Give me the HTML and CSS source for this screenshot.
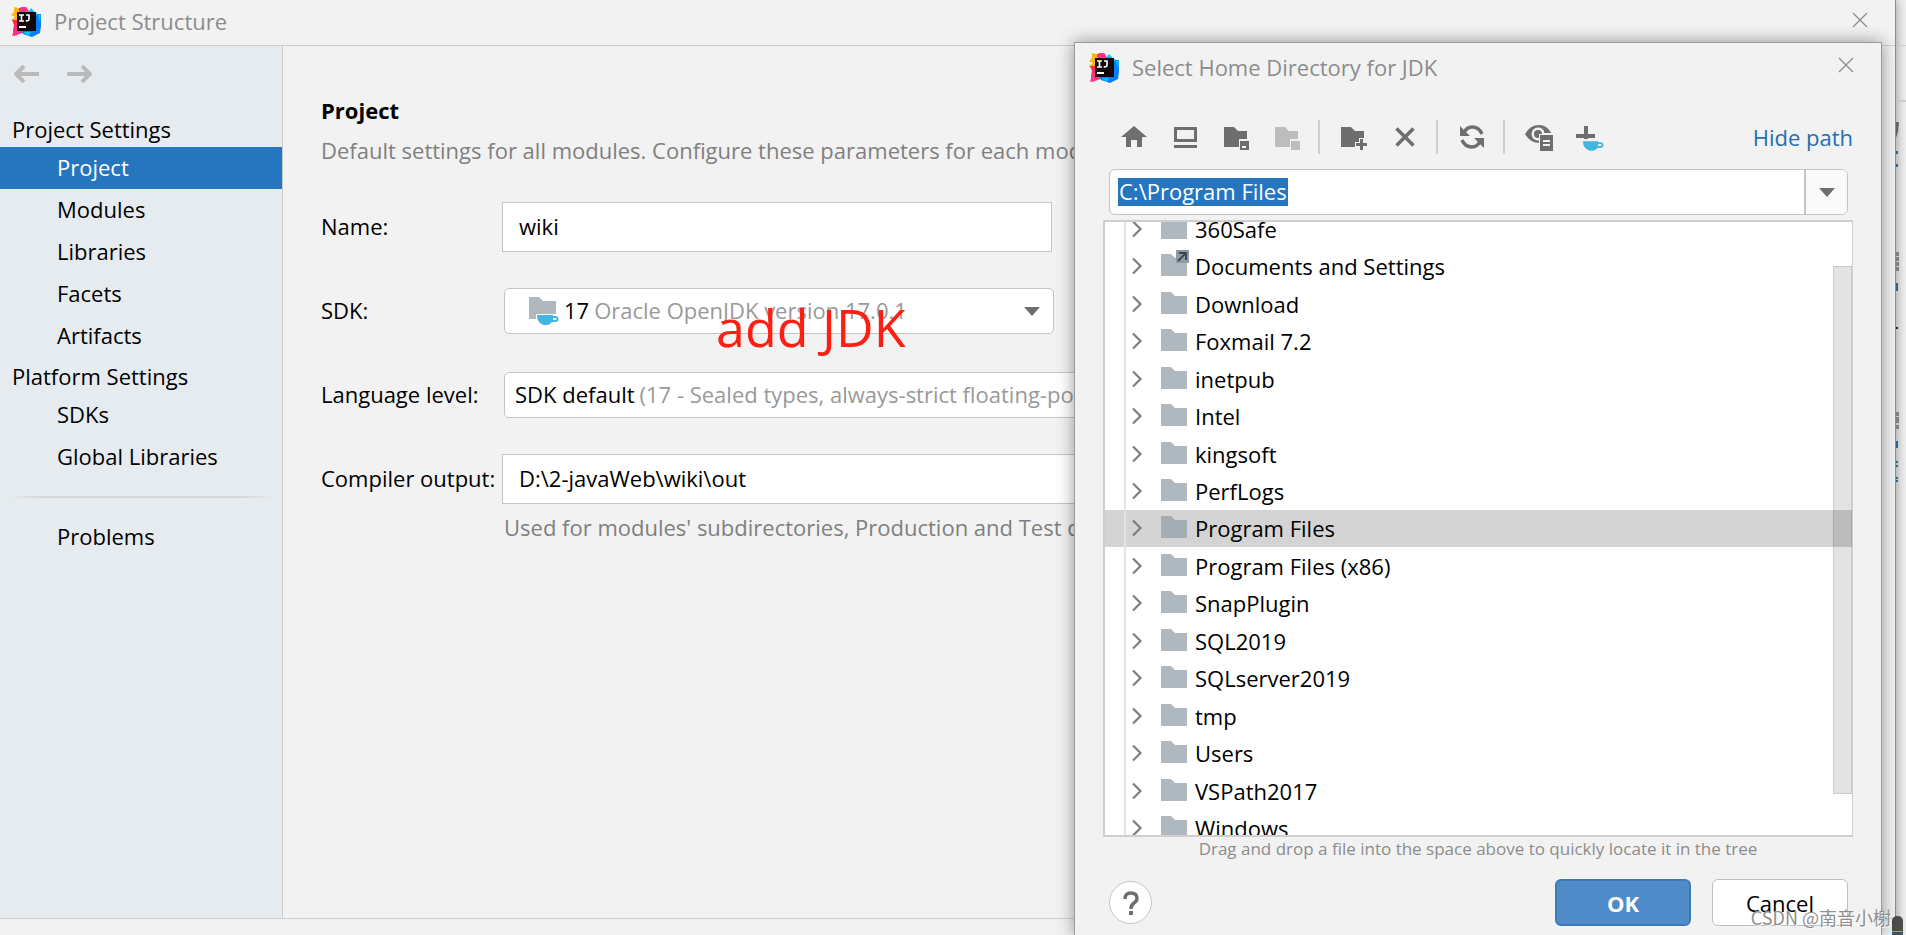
FILE: index.html
```html
<!DOCTYPE html>
<html lang="en">
<head>
<meta charset="utf-8">
<title>Project Structure</title>
<link rel="stylesheet" href="styles.css">
</head>
<body>
<svg class="defs" aria-hidden="true">
  <symbol id="logo" viewBox="0 0 30 30">
    <path fill="#fdb60d" d="M3 0l8 2 4 8-8 8-7-5 4-3-4-2 3-3z"/>
    <path fill="#fe2857" d="M8 1l7-1 4 6-10 6zM1 13l6 0 2 9 10 3-8 1-8 3-1-6 1-5z"/>
    <path fill="#ff318c" d="M10 0l5 0 3 5-9 1zM5 18l5 6 0 2-9 3 2-7z"/>
    <path fill="#07c3f2" d="M20 1l5 5 5 2-1 6-8-2-4-7z"/>
    <path fill="#087cfa" d="M24 8l6-1 0 12-1 7-8 4-9-3-2-3 14-1z"/>
    <path fill="#07c3f2" d="M27 8l3 0-1 8zM12 25l8 0-2 4z"/>
    <rect x="6" y="5" width="19" height="19" fill="#140709"/>
    <path fill="none" stroke="#fff" stroke-width="1.6" d="M8 8h5M10.500 8v6M8 14h5M15 8h3v4q0 2.300-3.300 1.800"/>
    <path fill="#fff" d="M8 19h7v2H8z"/>
  </symbol>
  <symbol id="folder" viewBox="0 0 26 22"><path fill="currentColor" d="M0 0h10l4 4h12v18H0z"/></symbol>
  <symbol id="close" viewBox="0 0 16 16"><path fill="none" stroke="#8f8f8f" stroke-width="1.400" d="M1 1l14 14M15 1L1 15"/></symbol>
  <symbol id="chevron" viewBox="0 0 12 18"><path fill="none" stroke="#7f7f7f" stroke-width="2.200" d="M2 1.500L9.500 9 2 16.500"/></symbol>
  <symbol id="caret" viewBox="0 0 16 9"><path fill="#6e6e6e" d="M0 0h16L8 9z"/></symbol>
  <symbol id="cup" viewBox="0 0 22 10"><path fill="#40b6e0" d="M0 0h16v1h2q3.500 0 3.500 3T18 7h-3q-2 3-5 3H7Q0 8 0 0z"/><path fill="#fff" d="M16 3h2.500q1 0 1 1t-1 1H16z"/></symbol>
</svg>

<div class="desktop">
  <section class="window" aria-label="Project Structure">
    <header class="titlebar">
      <svg class="logo"><use href="#logo"/></svg>
      <h1 class="title">Project Structure</h1>
      <button class="close" aria-label="Close"><svg><use href="#close"/></svg></button>
    </header>

    <div class="body">
      <nav class="sidebar">
        <div class="history">
          <button class="arrow" aria-label="Back"><svg viewBox="0 0 25 18"><path d="M25 9H2M10 1L2 9l8 8"/></svg></button>
          <button class="arrow" aria-label="Forward"><svg viewBox="0 0 25 18"><path d="M0 9h23M15 1l8 8-8 8"/></svg></button>
        </div>
        <h2 class="group">Project Settings</h2>
        <a class="item selected" href="#project">Project</a>
        <a class="item" href="#modules">Modules</a>
        <a class="item" href="#libraries">Libraries</a>
        <a class="item" href="#facets">Facets</a>
        <a class="item" href="#artifacts">Artifacts</a>
        <h2 class="group">Platform Settings</h2>
        <a class="item" href="#sdks">SDKs</a>
        <a class="item" href="#global">Global Libraries</a>
        <hr class="rule">
        <a class="item" href="#problems">Problems</a>
      </nav>

      <main class="content" id="project">
        <h2 class="heading">Project</h2>
        <p class="lead">Default settings for all modules. Configure these parameters for each module on the module page as needed.</p>
        <form class="form">
          <label for="name">Name:</label>
          <input class="text short" id="name" value="wiki">

          <label for="sdk">SDK:</label>
          <div class="combo short sdk">
            <svg class="sdk-icon" viewBox="0 0 30 28"><path fill="#afb8bf" d="M0 0h10l4 4h13v18H0z"/><path fill="#fff" d="M7 17h22v5H7z"/><use href="#cup" x="8" y="18" width="22" height="10"/></svg>
            <span>17</span>
            <select id="sdk"><option>Oracle OpenJDK version 17.0.1</option></select>
            <svg class="caret"><use href="#caret"/></svg>
          </div>

          <label for="level">Language level:</label>
          <div class="combo">
            <span>SDK default</span>
            <select id="level"><option>(17 - Sealed types, always-strict floating-point semantics)</option></select>
            <svg class="caret"><use href="#caret"/></svg>
          </div>

          <label for="output">Compiler output:</label>
          <input class="text" id="output" value="D:\2-javaWeb\wiki\out">
          <p class="hint">Used for modules' subdirectories, Production and Test directories for the corresponding sources.</p>
        </form>
      </main>
    </div>
    <footer class="statusbar"></footer>
  </section>

  <aside class="behind">
    <svg viewBox="0 0 11 935" preserveAspectRatio="xMinYMin meet" aria-hidden="true">
      <path fill="#c9c9c9" d="M0 45h11v1H0zM0 100h11v2H0z"/>
      <path fill="#555" d="M0 122h3l-1 10-2 6z"/>
      <path fill="#0a5a8a" d="M0 151h2v3H0zM0 164h2v3H0zM0 283h2v8H0zM0 441h2v7H0zM0 461h2v2H0zM0 465h2v2H0zM0 477h2v2H0zM0 480h2v2H0z"/>
      <path fill="#000060" d="M0 327h2v2H0z"/>
      <path fill="#777" d="M0 252h3v4H0zM0 257h3v4H0zM0 262h3v4H0zM0 267h3v4H0zM0 412h3v4H0zM0 417h3v6H0zM0 425h3v4H0z"/>
    </svg>
    <div class="marker"></div>
  </aside>

  <p class="annotation">add JDK</p>

  <section class="dialog" role="dialog" aria-labelledby="dialog-title">
    <header class="dialog-title">
      <svg class="logo"><use href="#logo"/></svg>
      <h2 class="title" id="dialog-title">Select Home Directory for JDK</h2>
      <button class="close" aria-label="Close dialog"><svg><use href="#close"/></svg></button>
    </header>

    <div class="toolbar">
      <button class="tool" aria-label="Home"><svg viewBox="0 0 28 28"><path d="M14 3l13 11h-5v10h-5v-7h-6v7H6V14H1z"/></svg></button>
      <button class="tool" aria-label="Desktop"><svg viewBox="0 0 28 28"><path fill-rule="evenodd" d="M3 4h23v15H3zM6 7v9h17V7zM3 22h23v3H3z"/></svg></button>
      <button class="tool" aria-label="Project directory"><svg viewBox="0 0 28 28"><path d="M2 4h10l4 4h9v8h-8v8H2z"/><path fill-rule="evenodd" d="M18 18h9v9h-9zM20 23v2h4v-2z"/></svg></button>
      <button class="tool" aria-label="Module directory" disabled><svg viewBox="0 0 28 28"><path d="M2 4h10l4 4h9v8h-8v8H2zM18 18h9v9h-9z"/></svg></button>
      <span class="divider"></span>
      <button class="tool" aria-label="New folder"><svg viewBox="0 0 28 28"><path d="M1 4h10l4 4h9v7h-5v4h-4v5H1zM20 16h3v4h4v3h-4v4h-3v-4h-4v-3h4z"/></svg></button>
      <button class="tool" aria-label="Delete"><svg viewBox="0 0 28 28"><path class="line" d="M5.500 5.500l17 17M22.500 5.500l-17 17"/></svg></button>
      <span class="divider"></span>
      <button class="tool" aria-label="Refresh"><svg viewBox="0 0 28 28"><path class="line" d="M6 9.500q3-5.500 8-5.500 7 0 10 7M22 18.500q-3 5.500-8 5.500-7 0-10-7"/><path d="M2 3v10h10zM26 25V15H16z"/></svg></button>
      <span class="divider"></span>
      <button class="tool" aria-label="Show hidden files"><svg viewBox="0 0 28 28"><path fill-rule="evenodd" d="M0 11Q5 2 14 2q8 0 12 8H15v10Q5 20 0 11zM13 4.500a6.500 6.500 0 1 0 2 12.700V10h4.400A6.500 6.500 0 0 0 13 4.500z"/><circle cx="13" cy="11" r="4"/><path fill="#f2f2f2" d="M14 11h14v17H14z"/><path fill-rule="evenodd" d="M15 12h13v16H15zM18 17v2h7v-2zM18 21v2h7v-2z"/></svg></button>
      <button class="tool" aria-label="Add JDK"><svg viewBox="0 0 28 28"><path d="M8 3h4v8h7v4h-7v3H8v-3H0v-4h8z"/><path fill="#f2f2f2" d="M6 16h22v3H6z"/><use href="#cup" x="7" y="18" width="21" height="10"/></svg></button>
      <a class="hide-path" href="#path">Hide path</a>
    </div>

    <div class="path">
      <span class="path-field"><input id="path" aria-label="Path" value="C:\Program Files" size="1"></span>
      <button class="path-button" aria-label="Show history"><svg class="caret"><use href="#caret"/></svg></button>
    </div>

    <div class="tree">
      <ul class="rows">
        <li><svg class="chevron"><use href="#chevron"/></svg><svg class="folder"><use href="#folder"/></svg>360Safe</li>
        <li><svg class="chevron"><use href="#chevron"/></svg><svg class="folder" viewBox="0 0 26 22"><use href="#folder" width="26" height="22"/><path fill="#8e9ba5" d="M15-4h13V9H15z"/><path fill="none" stroke="#3c4247" stroke-width="1.800" d="M18-1h7v7M25-1l-8 8"/></svg>Documents and Settings</li>
        <li><svg class="chevron"><use href="#chevron"/></svg><svg class="folder"><use href="#folder"/></svg>Download</li>
        <li><svg class="chevron"><use href="#chevron"/></svg><svg class="folder"><use href="#folder"/></svg>Foxmail 7.2</li>
        <li><svg class="chevron"><use href="#chevron"/></svg><svg class="folder"><use href="#folder"/></svg>inetpub</li>
        <li><svg class="chevron"><use href="#chevron"/></svg><svg class="folder"><use href="#folder"/></svg>Intel</li>
        <li><svg class="chevron"><use href="#chevron"/></svg><svg class="folder"><use href="#folder"/></svg>kingsoft</li>
        <li><svg class="chevron"><use href="#chevron"/></svg><svg class="folder"><use href="#folder"/></svg>PerfLogs</li>
        <li class="current"><svg class="chevron"><use href="#chevron"/></svg><svg class="folder"><use href="#folder"/></svg>Program Files</li>
        <li><svg class="chevron"><use href="#chevron"/></svg><svg class="folder"><use href="#folder"/></svg>Program Files (x86)</li>
        <li><svg class="chevron"><use href="#chevron"/></svg><svg class="folder"><use href="#folder"/></svg>SnapPlugin</li>
        <li><svg class="chevron"><use href="#chevron"/></svg><svg class="folder"><use href="#folder"/></svg>SQL2019</li>
        <li><svg class="chevron"><use href="#chevron"/></svg><svg class="folder"><use href="#folder"/></svg>SQLserver2019</li>
        <li><svg class="chevron"><use href="#chevron"/></svg><svg class="folder"><use href="#folder"/></svg>tmp</li>
        <li><svg class="chevron"><use href="#chevron"/></svg><svg class="folder"><use href="#folder"/></svg>Users</li>
        <li><svg class="chevron"><use href="#chevron"/></svg><svg class="folder"><use href="#folder"/></svg>VSPath2017</li>
        <li><svg class="chevron"><use href="#chevron"/></svg><svg class="folder"><use href="#folder"/></svg>Windows</li>
      </ul>
      <div class="thumb"></div>
    </div>
    <p class="drop-hint">Drag and drop a file into the space above to quickly locate it in the tree</p>

    <footer class="actions">
      <button class="help" aria-label="Help"><svg viewBox="0 0 16 24"><path fill="none" stroke="#6e6e6e" stroke-width="3.400" d="M2 8Q2 2 8 2t6 5.500q0 2.500-3 4.500T8 18"/><path fill="#6e6e6e" d="M6 20h4v4H6z"/></svg></button>
      <button class="button primary">OK</button>
      <button class="button">Cancel</button>
    </footer>
  </section>

  <p class="watermark">CSDN @南音小榭</p>
</div>
</body>
</html>
```
FILE: styles.css
```css
* { box-sizing: border-box; }

body, h1, h2, p, ul { margin: 0; padding: 0; }

body {
  background: #f2f2f2;
  color: #000;
  font: 22px/28px "Open Sans", "Noto Sans", sans-serif;
}

button, input, select { font: inherit; color: inherit; }
button { padding: 0; border: 0; background: none; }
a { color: inherit; text-decoration: none; }
svg { display: block; flex: none; }
.defs { position: absolute; width: 0; height: 0; }

.desktop {
  position: relative;
  display: flex;
  height: 100vh;
  overflow: hidden;
}

/* Main window */
.window {
  position: relative;
  z-index: 1;
  flex: 1;
  min-width: 0;
  display: flex;
  flex-direction: column;
  background: #f2f2f2;
  border-right: 1px solid #8e8e8e;
  box-shadow: 0 0 12px rgba(0, 0, 0, .4);
}

.titlebar {
  display: flex;
  align-items: center;
  height: 46px;
  padding: 0 27px 1px 11px;
  border-bottom: 1px solid #cdcdcd;
}

.logo { width: 30px; height: 30px; }

.title {
  flex: 1;
  padding: 0 0 3px 13px;
  color: #8c8c8c;
  font-size: 22px;
  font-weight: 400;
}

.close svg { width: 16px; height: 16px; }
.titlebar .close { padding-bottom: 4px; }

.body { flex: 1; display: flex; min-height: 0; }

.sidebar {
  flex: none;
  width: 283px;
  background: #e6ebef;
  border-right: 1px solid #c9ccce;
}

.history { display: flex; gap: 28px; padding: 19px 14px 27px; }
.arrow svg {
  width: 25px;
  height: 18px;
  fill: none;
  stroke: #bababa;
  stroke-width: 4;
}

.group {
  height: 37px;
  padding: 5px 12px 0;
  font-size: 22px;
  font-weight: 400;
}

.item {
  display: block;
  padding: 6px 57px 8px;
}

.selected { background: #2675bf; color: #fff; }

.rule {
  height: 2px;
  margin: 18px 10px;
  border: 0;
  background: linear-gradient(90deg, transparent, #d3d6d9 12%, #d3d6d9 88%, transparent);
}

.content {
  flex: 1;
  min-width: 0;
  overflow: hidden;
  padding: 50px 38px 0;
  white-space: nowrap;
}

.heading { font-size: 22px; }
.lead { margin-top: 12px; color: #808080; }

.form {
  display: grid;
  grid-template-columns: 181px 1fr;
  grid-template-rows: repeat(4, 50px);
  row-gap: 34px;
  align-items: center;
  margin-top: 38px;
}

.form label { padding-bottom: 2px; }

.text {
  width: 100%;
  height: 50px;
  padding: 0 16px 2px;
  border: 1px solid #c4c4c4;
  background: #fff;
}

.combo {
  display: flex;
  align-items: center;
  height: 46px;
  margin-left: 2px;
  padding: 0 13px 0 10px;
  gap: 5px;
  border: 1px solid #c4c4c4;
  border-radius: 5px;
  background: #fff;
}

.combo span { padding-bottom: 2px; }

.combo select {
  appearance: none;
  flex: 1;
  min-width: 0;
  padding: 0 0 2px;
  border: 0;
  background: none;
  color: #999;
}

.short { width: 550px; }
.sdk { padding-left: 24px; }
.sdk-icon { width: 30px; height: 28px; }
.caret { width: 16px; height: 9px; }

.hint {
  grid-column: 2;
  margin-top: -25px;
  padding-left: 2px;
  color: #808080;
}

.statusbar { height: 17px; border-top: 1px solid #cdcdcd; }

/* Editor edge visible past the window */
.behind {
  position: relative;
  flex: none;
  width: 10px;
  background: #f2f2f2;
}

.behind svg { position: relative; z-index: 2; width: 11px; height: 935px; opacity: .85; }

.marker {
  position: absolute;
  z-index: 3;
  right: 3px;
  bottom: 0;
  width: 11px;
  height: 19px;
  border-radius: 5px 5px 0 0;
  background: linear-gradient(#4d4d4d 15px, #e8912d 15px, #e8912d 16px, #4d4d4d 16px);
}

.annotation {
  position: absolute;
  z-index: 2;
  left: 716px;
  top: 293px;
  color: #ff1f12;
  font-size: 52px;
  line-height: 68px;
}

/* Directory chooser */
.dialog {
  position: absolute;
  z-index: 3;
  top: 42px;
  right: 24px;
  bottom: 0;
  left: 1074px;
  display: flex;
  flex-direction: column;
  padding: 0 28px;
  background: #f2f2f2;
  border: 1px solid #9b9b9b;
  border-bottom: 0;
  box-shadow: 0 0 16px rgba(0, 0, 0, .4);
}

.dialog-title {
  display: flex;
  align-items: center;
  height: 50px;
  margin: 0 -1px 18px -14px;
}

.dialog-title .close { padding-bottom: 6px; }

.toolbar {
  display: flex;
  align-items: center;
  height: 52px;
  padding-left: 17px;
}

.tool { margin-right: 23px; color: #6e6e6e; }
.tool svg { width: 28px; height: 28px; fill: currentColor; }
.tool .line { fill: none; stroke: currentColor; stroke-width: 3.500; }
.tool:disabled { color: #bdbdbd; }

.divider {
  width: 2px;
  height: 34px;
  margin: 0 20px 0 -6px;
  background: #cfcfcf;
}

.hide-path { margin-left: auto; color: #2470b3; }

.path {
  display: flex;
  height: 46px;
  margin: 6px 5px 5px 6px;
  border: 1px solid #c4c4c4;
  border-radius: 6px;
  background: #fff;
}

.path-field { flex: 1; display: flex; align-items: center; padding-left: 8px; }

.path-field input {
  field-sizing: content;
  height: 28px;
  padding: 0 1px 2px;
  border: 0;
  background: #2675bf;
  color: #fff;
}

.path-button {
  display: grid;
  place-items: center;
  width: 43px;
  border-left: 2px solid #c4c4c4;
  border-radius: 0 5px 5px 0;
  background: #fafafa;
}

.tree {
  position: relative;
  flex: 1;
  overflow: hidden;
  border: 2px solid #cfcfcf;
  border-right-width: 1px;
  background: #fff;
}

.rows {
  display: grid;
  grid-auto-rows: 1fr;
  height: 637px;
  margin-top: -12px;
  list-style: none;
  background: linear-gradient(#e3e3e3, #e3e3e3) 19px 0 / 2px 100% no-repeat;
}

.rows li { display: flex; align-items: center; padding-left: 26px; }
.current { background: linear-gradient(90deg, #d4d4d4 19px, #e3e3e3 19px, #e3e3e3 21px, #d4d4d4 21px); }
.chevron { width: 12px; height: 18px; margin-right: 18px; }
.folder {
  width: 26px;
  height: 22px;
  margin: 0 8px 2px 0;
  overflow: visible;
  color: #afb8bf;
}
.current .folder { color: #a4adb4; }

.thumb {
  position: absolute;
  top: 44px;
  right: 0;
  bottom: 41px;
  width: 19px;
  border: 1px solid rgba(0, 0, 0, .1);
  background: rgba(0, 0, 0, .11);
}

.drop-hint {
  color: #8c8c8c;
  font-size: 17px;
  line-height: 24px;
  text-align: center;
}

.actions {
  display: flex;
  align-items: flex-start;
  gap: 21px;
  height: 74px;
  padding: 18px 5px 0 6px;
}

.help {
  display: grid;
  place-items: center;
  width: 43px;
  height: 43px;
  margin: 2px auto 0 0;
  border: 1px solid #c4c4c4;
  border-radius: 50%;
  background: #fff;
}

.help svg { width: 16px; height: 24px; }

.button {
  width: 136px;
  height: 47px;
  border: 1px solid #c0c0c0;
  border-radius: 6px;
  background: #fff;
}

.primary {
  border: 2px solid #4079b8;
  background: #4f8ac9;
  color: #fff;
  font-weight: 700;
}

.watermark {
  position: absolute;
  z-index: 4;
  right: 15px;
  bottom: 4px;
  color: #8f8f8f;
  font: 18px/28px "Noto Sans CJK SC", sans-serif;
  text-shadow: 1px 1px 0 rgba(255, 255, 255, .8);
}
```
